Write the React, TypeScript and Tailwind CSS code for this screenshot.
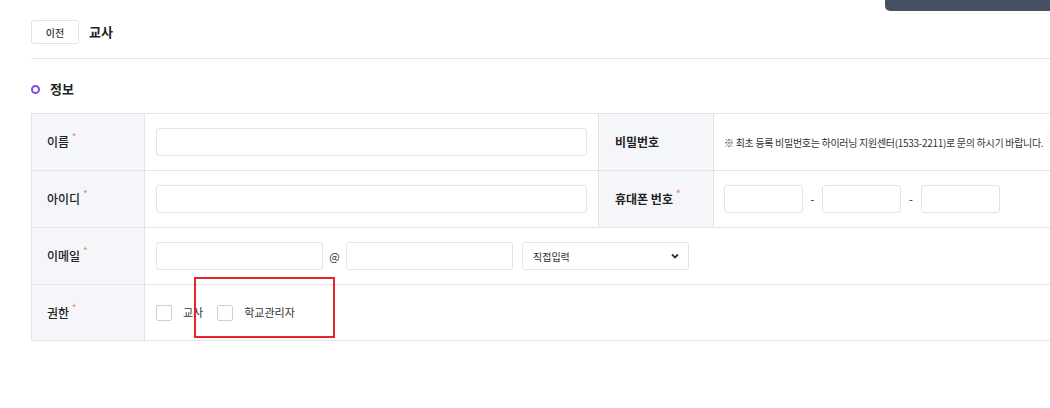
import React from "react";

const Req = () => <span className="ml-[3px] relative -top-[5px] text-[9px] text-[#f28b5b]">*</span>;

const Input = ({ w }: { w: string }) => (
  <div className={`${w} h-[28px] rounded-[3px] border border-[#e3e3e3] bg-white`} />
);

export default function App() {
  return (
    <div className="relative w-[1050px] h-[408px] overflow-hidden bg-white text-[#222] [font-family:'Noto_Sans_CJK_KR','Noto_Sans',sans-serif]">
      <div className="absolute top-0 left-[885px] w-[200px] h-[11px] rounded-bl-[5px] bg-[#474f63]" />

      <div className="pl-[31px] pt-[20px]">
        <div className="flex items-center gap-[10px]">
          <div className="w-[48px] h-[24px] rounded-[3px] border border-[#e2e2e2] flex items-center justify-center text-[10px] font-medium text-[#333]">이전</div>
          <div className="text-[13px] font-bold text-[#222]">교사</div>
        </div>
        <div className="mt-[14px] h-px bg-[#e4e4e4]" />

        <div className="mt-[22px] flex items-center gap-[10px] h-[16px]">
          <div className="w-[9px] h-[9px] rounded-full border-[2.5px] border-[#7b4cf5]" />
          <div className="text-[13px] font-bold text-[#222]">정보</div>
        </div>

        <div className="mt-[16px] w-[1040px] border-t border-l border-[#e4e4e4] text-[12px]">
          {/* row 1 */}
          <div className="flex h-[57px] border-b border-[#e4e4e4]">
            <div className="w-[113px] shrink-0 bg-[#f5f6fa] border-r border-[#e4e4e4] flex items-center pl-[15px] font-medium">이름<Req /></div>
            <div className="w-[453px] shrink-0 flex items-center pl-[11px]"><Input w="w-[431px]" /></div>
            <div className="w-[116px] shrink-0 bg-[#f5f6fa] border-x border-[#e4e4e4] flex items-center pl-[16px] font-bold">비밀번호</div>
            <div className="flex-1 flex items-center pl-[10px] text-[10px] tracking-[-0.3px] text-[#333] whitespace-nowrap">※ 최초 등록 비밀번호는 하이러닝 지원센터(1533-2211)로 문의 하시기 바랍니다.</div>
          </div>
          {/* row 2 */}
          <div className="flex h-[57px] border-b border-[#e4e4e4]">
            <div className="w-[113px] shrink-0 bg-[#f5f6fa] border-r border-[#e4e4e4] flex items-center pl-[15px] font-medium">아이디<Req /></div>
            <div className="w-[453px] shrink-0 flex items-center pl-[11px]"><Input w="w-[431px]" /></div>
            <div className="w-[116px] shrink-0 bg-[#f5f6fa] border-x border-[#e4e4e4] flex items-center pl-[16px] font-bold">휴대폰 번호<Req /></div>
            <div className="flex-1 flex items-center pl-[10px]">
              <Input w="w-[79px]" />
              <span className="w-[19px] text-center text-[11px]">-</span>
              <Input w="w-[79px]" />
              <span className="w-[20px] text-center text-[11px]">-</span>
              <Input w="w-[79px]" />
            </div>
          </div>
          {/* row 3 */}
          <div className="flex h-[57px] border-b border-[#e4e4e4]">
            <div className="w-[113px] shrink-0 bg-[#f5f6fa] border-r border-[#e4e4e4] flex items-center pl-[15px] font-medium">이메일<Req /></div>
            <div className="flex-1 flex items-center pl-[11px]">
              <Input w="w-[167px]" />
              <span className="w-[23px] text-center text-[11px] text-[#333]">@</span>
              <Input w="w-[167px]" />
              <div className="ml-[9px] w-[167px] h-[28px] rounded-[3px] border border-[#e3e3e3] flex items-center justify-between pl-[10px] pr-[9px] text-[10px] text-[#333]">
                <span>직접입력</span>
                <svg width="8" height="6" viewBox="0 0 8 6"><path d="M1 1.5 L4 4.5 L7 1.5" stroke="#333" strokeWidth="1.8" fill="none" /></svg>
              </div>
            </div>
          </div>
          {/* row 4 */}
          <div className="flex h-[56px] border-b border-[#e4e4e4]">
            <div className="w-[113px] shrink-0 bg-[#f5f6fa] border-r border-[#e4e4e4] flex items-center pl-[15px] font-medium">권한<Req /></div>
            <div className="flex-1 flex items-center pl-[11px] text-[11px] text-[#333]">
              <div className="w-[16px] h-[16px] rounded-[2px] border border-[#cfcfcf]" />
              <span className="ml-[11px]">교사</span>
              <div className="ml-[14px] w-[16px] h-[16px] rounded-[2px] border border-[#cfcfcf]" />
              <span className="ml-[11px]">학교관리자</span>
            </div>
          </div>
        </div>
      </div>

      <div className="absolute left-[194px] top-[277px] w-[141px] h-[61px] border-2 border-[#e8232a]" />
    </div>
  );
}
